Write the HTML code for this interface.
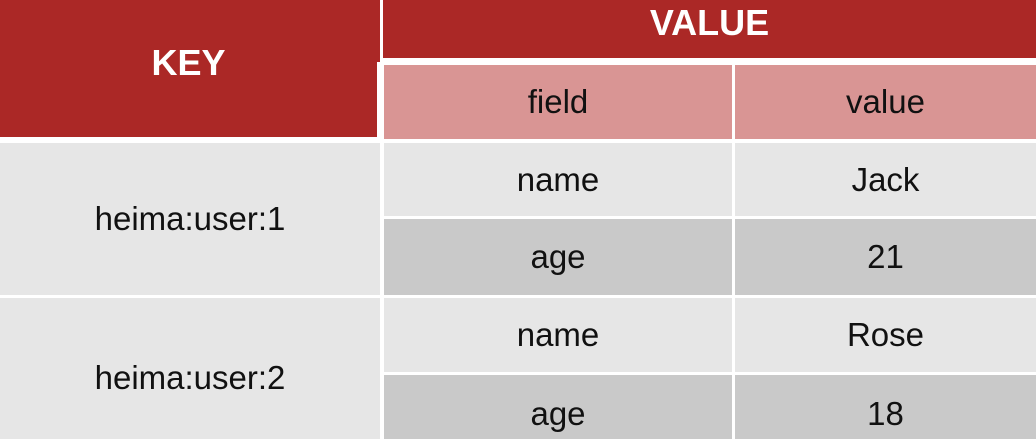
<!DOCTYPE html><html><head><style>
html,body{margin:0;width:1036px;height:439px;background:#fff;position:relative;overflow:hidden;font-family:"Liberation Sans",sans-serif}
div.c{position:absolute;display:flex;align-items:center;justify-content:center;color:#111;font-size:33px}
.r{background:#ab2826;color:#fff!important;font-weight:bold;font-size:36px!important}
.p{background:#d99594}.g{background:#e6e6e6}.d{background:#c9c9c9}
</style></head><body>
<div class="c r" style="left:0;top:0;width:380px;height:62px"></div>
<div class="c r" style="left:0;top:0;width:377px;height:137px;padding-bottom:12px;box-sizing:border-box">KEY</div>
<div class="c r" style="left:383px;top:0;width:653px;height:58px;padding-bottom:12px;box-sizing:border-box">VALUE</div>
<div class="c p" style="left:384px;top:65px;width:348px;height:74px">field</div>
<div class="c p" style="left:735px;top:65px;width:301px;height:74px">value</div>
<div class="c g" style="left:0;top:143px;width:380px;height:152px">heima:user:1</div>
<div class="c g" style="left:0;top:298px;width:380px;height:141px;padding-top:18px;box-sizing:border-box">heima:user:2</div>
<div class="c g" style="left:384px;top:143px;width:348px;height:73px">name</div>
<div class="c g" style="left:735px;top:143px;width:301px;height:73px">Jack</div>
<div class="c d" style="left:384px;top:219px;width:348px;height:76px">age</div>
<div class="c d" style="left:735px;top:219px;width:301px;height:76px">21</div>
<div class="c g" style="left:384px;top:298px;width:348px;height:74px">name</div>
<div class="c g" style="left:735px;top:298px;width:301px;height:74px">Rose</div>
<div class="c d" style="left:384px;top:375px;width:348px;height:78px">age</div>
<div class="c d" style="left:735px;top:375px;width:301px;height:78px">18</div>
</body></html>
